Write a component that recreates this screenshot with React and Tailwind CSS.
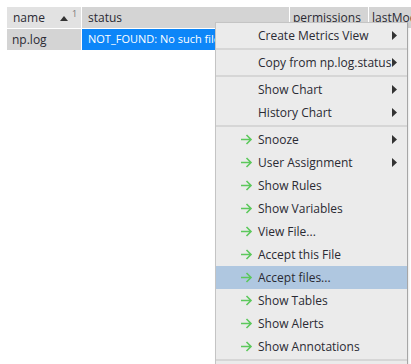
import React from "react";

const Arrow = () => (
  <svg width="13" height="11" viewBox="0 0 13 11" className="shrink-0">
    <path d="M1 5.5 H11 M6.5 1 L11 5.5 L6.5 10" fill="none" stroke="#5cc85c" strokeWidth="1.6" />
  </svg>
);

const Tri = () => (
  <svg width="5" height="9" viewBox="0 0 5 9" className="absolute right-[10px] top-[7px]">
    <path d="M0 0 L5 4.5 L0 9 Z" fill="#333" />
  </svg>
);

const Item = ({ label, arrow, sub, hl }) => (
  <div className={`relative flex h-[23px] items-center ${hl ? "bg-[#afc7e0]" : ""}`}>
    <div className="flex w-[42px] justify-end pr-[5px]">{arrow ? <Arrow /> : null}</div>
    <span className="whitespace-nowrap">{label}</span>
    {sub ? <Tri /> : null}
  </div>
);

const Sep = () => <div className="my-[1px] h-[2px] bg-[#d6d6d6]" />;

export default function App() {
  return (
    <div
      className="relative h-[364px] w-[411px] overflow-hidden bg-white text-[12px] text-[#2a2a33]"
      style={{ fontFamily: '"Open Sans", sans-serif' }}
    >
      <div className="pl-[7px] pt-[7px] text-[11px]">
        <div className="flex h-[22px] gap-[1px] border-b border-white">
          <div className="relative flex w-[74px] shrink-0 items-center bg-[#e2e2e2] pl-[6px] text-[12px]">
            name
            <svg width="8" height="5" viewBox="0 0 8 5" className="absolute left-[53px] top-[9px]">
              <path d="M0 5 L4 0 L8 5 Z" fill="#333" />
            </svg>
            <span className="absolute left-[65px] top-[0px] text-[9px] text-[#777]">1</span>
          </div>
          <div className="flex w-[207px] shrink-0 items-center bg-[#d4d4d4] pl-[6px] text-[12px]">status</div>
          <div className="flex w-[78px] shrink-0 items-center bg-[#d4d4d4] pl-[3px] text-[12px]">permissions</div>
          <div className="flex w-[80px] shrink-0 items-center bg-[#d4d4d4] pl-[3px] text-[12px]">lastModified</div>
        </div>
        <div className="flex h-[21px] gap-[1px] text-[12px]">
          <div className="flex w-[74px] shrink-0 items-center bg-[#d4d4d4] pl-[5px]">np.log</div>
          <div className="flex w-[207px] shrink-0 items-center overflow-hidden whitespace-nowrap bg-[#0d86f8] pl-[6px] text-[11px] text-white">
            NOT_FOUND: No such file or directory
          </div>
        </div>
      </div>

      <div className="absolute left-[215px] top-[22px] w-[193px] border border-[#c4c4c4] border-r-[#a6a6a6] bg-[#ebebeb] pt-[1px] shadow-[1px_1px_2px_rgba(0,0,0,0.1)]">
        <Item label="Create Metrics View" sub />
        <Sep />
        <Item label="Copy from np.log.status" sub />
        <Sep />
        <Item label="Show Chart" sub />
        <Item label="History Chart" sub />
        <Sep />
        <Item label="Snooze" arrow sub />
        <Item label="User Assignment" arrow sub />
        <Item label="Show Rules" arrow />
        <Item label="Show Variables" arrow />
        <Item label="View File..." arrow />
        <Item label="Accept this File" arrow />
        <Item label="Accept files..." arrow hl />
        <Item label="Show Tables" arrow />
        <Item label="Show Alerts" arrow />
        <Item label="Show Annotations" arrow />
        <Sep />
        <div className="h-[20px]" />
      </div>
    </div>
  );
}
